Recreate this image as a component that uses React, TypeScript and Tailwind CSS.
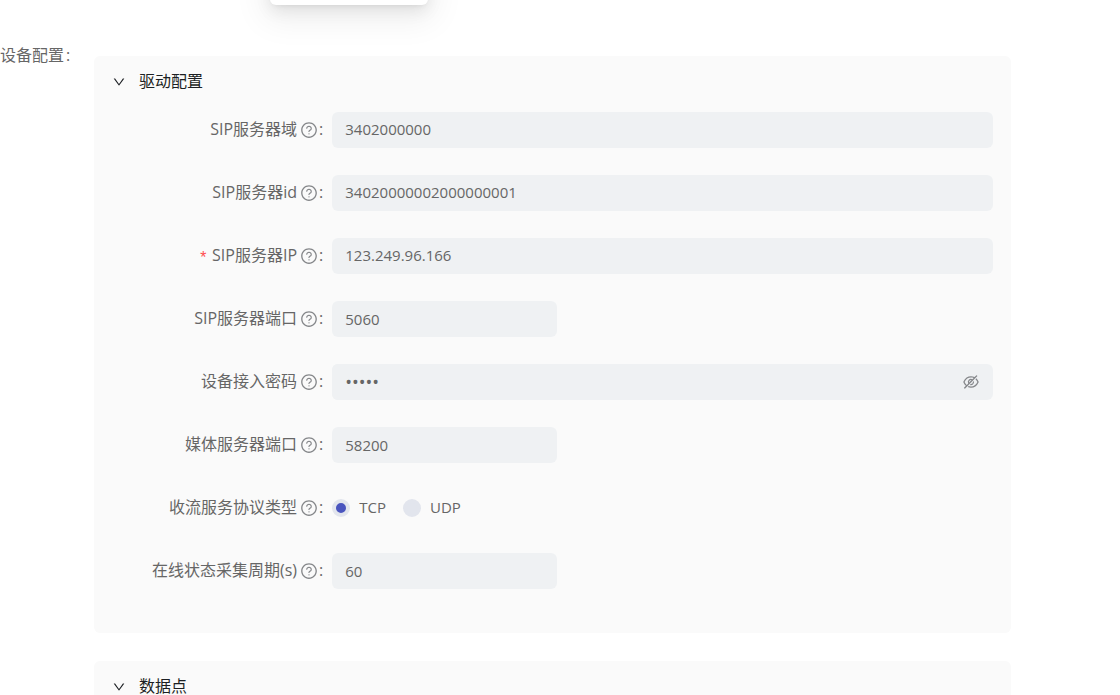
import { useState } from "react";
import type { ReactNode } from "react";
import {
  AiOutlineDown,
  AiOutlineEyeInvisible,
  AiOutlineQuestionCircle,
} from "react-icons/ai";

type PanelProps = {
  title: string;
  children?: ReactNode;
};

const Panel = ({ title, children }: PanelProps) => {
  const [open, setOpen] = useState(true);

  return (
    <section className="rounded-md bg-[#fafafa] px-[18px] pb-11">
      <button
        type="button"
        className="flex h-14 w-full items-center gap-[13px] pb-1 text-base text-[#1c1f23]"
        onClick={() => setOpen(!open)}
      >
        <AiOutlineDown className="size-[14px]" />
        <span className="pb-0.5">{title}</span>
      </button>
      {open && children}
    </section>
  );
};

type FieldProps = {
  id: string;
  label: string;
  required?: boolean;
  children: ReactNode;
};

const Field = ({ id, label, required, children }: FieldProps) => (
  <div className="flex h-9 items-center">
    <div className="flex w-1/4 shrink-0 items-center justify-end pr-[9px]">
      {required && (
        <span className="mr-1 pt-1.5 font-['Liberation_Mono',monospace] text-base text-[#ff4d4f]">
          *
        </span>
      )}
      <label htmlFor={id} className="pb-0.5 whitespace-nowrap">
        {label}
      </label>
      <AiOutlineQuestionCircle className="ml-[3px] size-[18px] text-[#85878a]" />
      <span className="ml-px pb-0.5">:</span>
    </div>
    {children}
  </div>
);

const boxClass =
  "h-9 rounded-md bg-[#eff1f3] px-[13px] text-[#666] outline-none";
const textClass = `${boxClass} min-w-0 flex-1 pb-0.5 text-[15px]`;
const numberClass = `${boxClass} w-[225px] text-[15px]`;

type RadioProps = {
  id: string;
  value: string;
  defaultChecked?: boolean;
};

const Radio = ({ id, value, defaultChecked }: RadioProps) => (
  <div className="flex items-center gap-[9px]">
    <input
      id={id}
      type="radio"
      name="protocol"
      value={value}
      defaultChecked={defaultChecked}
      className="size-[18px] appearance-none rounded-full border-4 border-[#e2e5ed] bg-[#e2e5ed] checked:bg-[#4954be]"
    />
    <label htmlFor={id} className="pb-0.5 text-[15px]">
      {value}
    </label>
  </div>
);

const App = () => {
  return (
    <div className="relative h-screen overflow-hidden bg-white font-['Open_Sans','Noto_Sans_CJK_SC',sans-serif] text-base text-[#666]">
      {/* bottom edge of the dropdown */}
      <div className="absolute -top-40 left-[270px] h-[165px] w-[158px] rounded-md bg-white shadow-[0_6px_16px_rgba(0,0,0,0.08),0_9px_32px_8px_rgba(0,0,0,0.06),0_3px_6px_-4px_rgba(0,0,0,0.12)]" />

      <div className="flex pt-14 pr-[109px]">
        <div className="-mt-[13px] flex w-[94px] shrink-0 items-start whitespace-nowrap">
          设备配置<span className="ml-0.5">:</span>
        </div>
        <main className="flex min-w-0 flex-1 flex-col gap-7">
          <Panel title="驱动配置">
            <form className="flex flex-col gap-[27px]">
              <Field id="domain" label="SIP服务器域">
                <input
                  id="domain"
                  className={textClass}
                  defaultValue="3402000000"
                />
              </Field>
              <Field id="sipId" label="SIP服务器id">
                <input
                  id="sipId"
                  className={textClass}
                  defaultValue="34020000002000000001"
                />
              </Field>
              <Field id="sipIp" label="SIP服务器IP" required>
                <input
                  id="sipIp"
                  className={textClass}
                  defaultValue="123.249.96.166"
                />
              </Field>
              <Field id="sipPort" label="SIP服务器端口">
                <input
                  id="sipPort"
                  className={numberClass}
                  defaultValue="5060"
                />
              </Field>
              <Field id="password" label="设备接入密码">
                <div className="flex min-w-0 flex-1 items-center rounded-md bg-[#eff1f3] pr-[13px]">
                  <input
                    id="password"
                    type="password"
                    className={`${boxClass} min-w-0 flex-1 text-lg`}
                    defaultValue="12345"
                  />
                  <button type="button" aria-label="显示密码">
                    <AiOutlineEyeInvisible className="size-[18px] text-[#85878a]" />
                  </button>
                </div>
              </Field>
              <Field id="mediaPort" label="媒体服务器端口">
                <input
                  id="mediaPort"
                  className={numberClass}
                  defaultValue="58200"
                />
              </Field>
              <Field id="tcp" label="收流服务协议类型">
                <div className="flex gap-[17px]">
                  <Radio id="tcp" value="TCP" defaultChecked />
                  <Radio id="udp" value="UDP" />
                </div>
              </Field>
              <Field id="period" label="在线状态采集周期(s)">
                <input
                  id="period"
                  className={numberClass}
                  defaultValue="60"
                />
              </Field>
            </form>
          </Panel>
          <Panel title="数据点" />
        </main>
      </div>
    </div>
  );
};

export default App;
